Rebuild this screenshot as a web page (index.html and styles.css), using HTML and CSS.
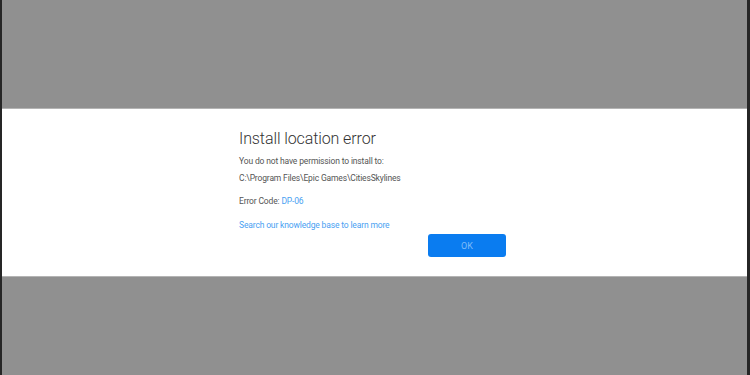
FILE: index.html
```html
<!DOCTYPE html>
<html lang="en">
<head>
    <meta charset="UTF-8">
    <meta name="viewport" content="width=device-width, initial-scale=1.0">
    <title>Install location error</title>
    <link rel="stylesheet" href="styles.css">
</head>
<body>
    <div class="backdrop top"></div>
    <div class="dialog">
        <div class="content">
            <h1>Install location error</h1>
            <p>You do not have permission to install to:</p>
            <p>C:\Program Files\Epic Games\CitiesSkylines</p>
            <p class="code">Error Code: <a href="#">DP-06</a></p>
            <p class="kb"><a href="#">Search our knowledge base to learn more</a></p>
            <div class="actions">
                <button>OK</button>
            </div>
        </div>
    </div>
    <div class="backdrop bottom"></div>
</body>
</html>
```

FILE: styles.css
```css
html, body {
    height: 100%;
}
body {
    margin: 0;
    font-family: Roboto, "Liberation Sans", sans-serif;
    background: #909090;
    border-left: 2px solid #262626;
    border-right: 3px solid #262626;
    box-sizing: border-box;
    display: flex;
    flex-direction: column;
}
.backdrop.top {
    height: 108px;
    flex-shrink: 0;
}
.backdrop.bottom {
    flex: 1;
}
.dialog {
    flex-shrink: 0;
    background: #fff;
    border-top: 1px solid #b4b4b4;
    border-bottom: 1px solid #b4b4b4;
    height: 169px;
    box-sizing: border-box;
    display: flex;
    justify-content: center;
}
.content {
    width: 267px;
    margin-left: -4px;
    padding-top: 20px;
}
h1 {
    margin: 0 0 8px;
    font-size: 16px;
    font-weight: 300;
    color: #333;
    letter-spacing: -0.1px;
}
p {
    margin: 0 0 6px;
    font-size: 8.5px;
    letter-spacing: -0.15px;
    color: #555;
    line-height: 11px;
}
p.code {
    margin-top: 12px;
}
p.kb {
    margin-top: 13px;
}
a {
    color: #4a9ff2;
    text-decoration: none;
}
.actions {
    display: flex;
    justify-content: flex-end;
    margin-top: -3px;
}
button {
    width: 78px;
    height: 23px;
    border: none;
    border-radius: 3px;
    background: #0a7cf0;
    color: #7dbbf8;
    font-family: inherit;
    font-size: 9px;
}
```
